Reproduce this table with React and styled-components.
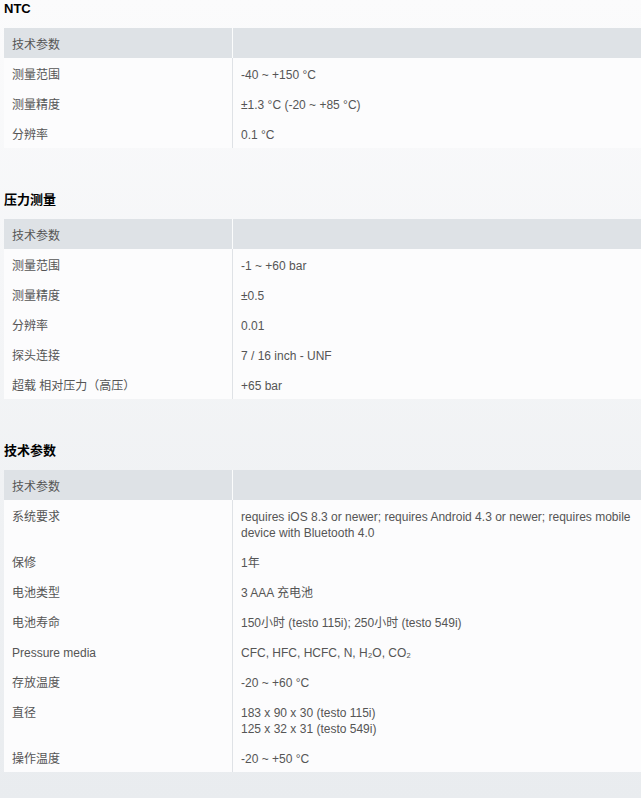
import React from "react";
import styled, { createGlobalStyle } from "styled-components";

const GlobalStyle = createGlobalStyle`
  html, body {
    margin: 0;
    padding: 0;
    height: 798px;
    overflow: hidden;
  }
  body {
    background: linear-gradient(to bottom, #fbfbfc 0%, #e9ecef 100%);
    font-family: "Liberation Sans", "Noto Sans CJK SC", sans-serif;
    font-size: 12px;
    color: #555;
  }
`;

const sections = [
  {
    title: "NTC",
    rows: [
      ["测量范围", "-40 ~ +150 °C"],
      ["测量精度", "±1.3 °C (-20 ~ +85 °C)"],
      ["分辨率", "0.1 °C"],
    ],
  },
  {
    title: "压力测量",
    rows: [
      ["测量范围", "-1 ~ +60 bar"],
      ["测量精度", "±0.5"],
      ["分辨率", "0.01"],
      ["探头连接", "7 / 16 inch - UNF"],
      ["超载 相对压力（高压）", "+65 bar"],
    ],
  },
  {
    title: "技术参数",
    rows: [
      [
        "系统要求",
        "requires iOS 8.3 or newer; requires Android 4.3 or newer; requires mobile device with Bluetooth 4.0",
      ],
      ["保修", "1年"],
      ["电池类型", "3 AAA 充电池"],
      ["电池寿命", "150小时 (testo 115i); 250小时 (testo 549i)"],
      ["Pressure media", "CFC, HFC, HCFC, N, H₂O, CO₂"],
      ["存放温度", "-20 ~ +60 °C"],
      ["直径", ["183 x 90 x 30 (testo 115i)", "125 x 32 x 31 (testo 549i)"]],
      ["操作温度", "-20 ~ +50 °C"],
    ],
  },
];

const Page = styled.div`
  padding: 1px 4px 0;
  width: 660px;
`;

const Section = styled.section`
  margin-bottom: 44px;
`;

const Title = styled.h3`
  margin: 0 0 11px;
  font-size: 13px;
  line-height: 16px;
  font-weight: bold;
  color: #000;
`;

const Table = styled.table`
  width: 100%;
  border-collapse: collapse;
  table-layout: fixed;
`;

const HeadCell = styled.th`
  background: #dee2e6;
  text-align: left;
  font-weight: normal;
  padding: 9px 8px 5px;
  line-height: 16px;
  color: #555;
  width: ${(p) => (p.$first ? "212px" : "auto")};
  border-right: ${(p) => (p.$first ? "1px solid #fbfcfc" : "none")};
`;

const Cell = styled.td`
  background: #fcfcfd;
  padding: 9px 8px 5px;
  line-height: 16px;
  vertical-align: top;
  border-right: ${(p) => (p.$first ? "1px solid #dfe2e6" : "none")};
`;

const Line = styled.div``;

function SpecTable({ title, rows }) {
  return (
    <Section>
      <Title>{title}</Title>
      <Table>
        <thead>
          <tr>
            <HeadCell $first>技术参数</HeadCell>
            <HeadCell />
          </tr>
        </thead>
        <tbody>
          {rows.map(([label, value]) => (
            <tr key={label}>
              <Cell $first>{label}</Cell>
              <Cell>
                {Array.isArray(value)
                  ? value.map((v) => <Line key={v}>{v}</Line>)
                  : value}
              </Cell>
            </tr>
          ))}
        </tbody>
      </Table>
    </Section>
  );
}

export default function App() {
  return (
    <>
      <GlobalStyle />
      <Page>
        {sections.map((s) => (
          <SpecTable key={s.title} title={s.title} rows={s.rows} />
        ))}
      </Page>
    </>
  );
}
